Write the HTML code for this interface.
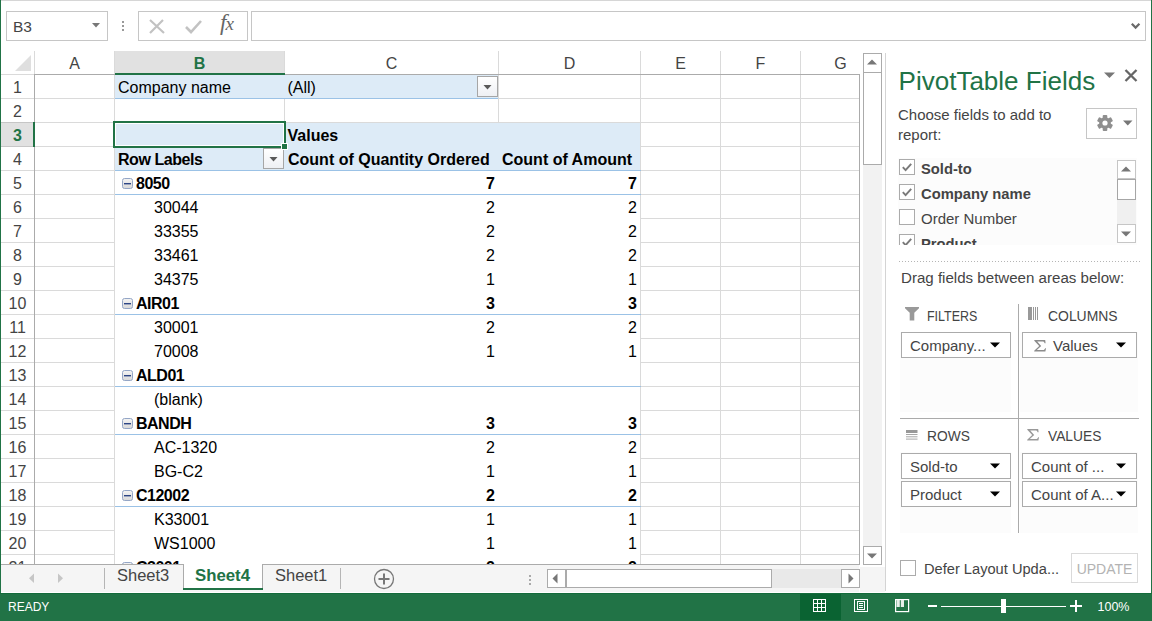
<!DOCTYPE html>
<html><head><meta charset="utf-8"><style>
html,body{margin:0;padding:0;}
body{width:1152px;height:621px;position:relative;overflow:hidden;background:#fff;font-family:"Liberation Sans", sans-serif;}
body>div,body>svg{position:absolute;}
.t{white-space:nowrap;}
svg{display:block;}
</style></head><body>
<div style="left:0px;top:0px;width:1px;height:621px;background:#217346"></div>
<div style="left:1151px;top:0px;width:1px;height:621px;background:#217346"></div>
<div style="left:1px;top:0px;width:1150px;height:1px;background:#d6d6d6"></div>
<div style="left:6px;top:11px;width:102px;height:30px;border:1px solid #c6c6c6;box-sizing:border-box;background:#fff"></div>
<div class="t" style="left:13px;top:16.83px;font-size:15.5px;line-height:20px;color:#444;font-weight:normal;">B3</div>
<svg style="left:92px;top:23px" width="8" height="5"><path d="M0 0H8L4 4.5Z" fill="#777"/></svg>
<div style="left:122px;top:21px;width:2px;height:2px;background:#999"></div>
<div style="left:122px;top:25px;width:2px;height:2px;background:#999"></div>
<div style="left:122px;top:29px;width:2px;height:2px;background:#999"></div>
<div style="left:138px;top:11px;width:110px;height:30px;border:1px solid #c6c6c6;box-sizing:border-box;background:#fff"></div>
<svg style="left:148px;top:18px" width="18" height="17"><path d="M2 2L16 15M15 2L2 15" stroke="#c2c2c2" stroke-width="2.2" fill="none"/></svg>
<svg style="left:184px;top:18px" width="19" height="17"><path d="M2 9L7 14L17 3" stroke="#c2c2c2" stroke-width="2.6" fill="none"/></svg>
<div class="t" style="left:220px;top:11px;font-family:'Liberation Serif',serif;font-style:italic;font-weight:normal;font-size:23px;line-height:24px;color:#666;letter-spacing:-1px">f<span style="font-size:19px">x</span></div>
<div style="left:251px;top:11px;width:895px;height:30px;border:1px solid #c6c6c6;box-sizing:border-box;background:#fff"></div>
<svg style="left:1131px;top:23px" width="10" height="7"><path d="M0 1.6L1.6 0L4.6 3L7.6 0L9.2 1.6L4.6 6.2Z" fill="#6a6a6a"/></svg>
<div style="left:115px;top:51px;width:169px;height:22px;background:#e1e1e1"></div>
<div style="left:114px;top:51px;width:1px;height:23px;background:#dadada"></div>
<div style="left:284px;top:51px;width:1px;height:23px;background:#dadada"></div>
<div style="left:498px;top:51px;width:1px;height:23px;background:#dadada"></div>
<div style="left:640px;top:51px;width:1px;height:23px;background:#dadada"></div>
<div style="left:720px;top:51px;width:1px;height:23px;background:#dadada"></div>
<div style="left:800px;top:51px;width:1px;height:23px;background:#dadada"></div>
<div style="left:34px;top:51px;width:1px;height:23px;background:#dadada"></div>
<div class="t" style="left:-75.5px;width:300px;text-align:center;top:54.26px;font-size:16px;line-height:20px;color:#444;font-weight:normal;">A</div>
<div class="t" style="left:49.5px;width:300px;text-align:center;top:54.26px;font-size:16px;line-height:20px;color:#217346;font-weight:bold;">B</div>
<div class="t" style="left:241.5px;width:300px;text-align:center;top:54.26px;font-size:16px;line-height:20px;color:#444;font-weight:normal;">C</div>
<div class="t" style="left:419.5px;width:300px;text-align:center;top:54.26px;font-size:16px;line-height:20px;color:#444;font-weight:normal;">D</div>
<div class="t" style="left:530.5px;width:300px;text-align:center;top:54.26px;font-size:16px;line-height:20px;color:#444;font-weight:normal;">E</div>
<div class="t" style="left:610.5px;width:300px;text-align:center;top:54.26px;font-size:16px;line-height:20px;color:#444;font-weight:normal;">F</div>
<div class="t" style="left:690.5px;width:300px;text-align:center;top:54.26px;font-size:16px;line-height:20px;color:#444;font-weight:normal;">G</div>
<svg style="left:14px;top:54px" width="18" height="18"><path d="M1 17H17V1Z" fill="#dfdfdf"/></svg>
<div style="left:1px;top:74px;width:33px;height:1px;background:#dadada"></div>
<div style="left:34px;top:74px;width:826px;height:1px;background:#ababab"></div>
<div style="left:115px;top:73px;width:170px;height:2px;background:#217346"></div>
<div style="left:34px;top:74px;width:1px;height:491px;background:#ababab"></div>
<div style="left:859px;top:74px;width:1px;height:491px;background:#ababab"></div>
<div style="left:1px;top:98px;width:33px;height:1px;background:#dadada"></div>
<div class="t" style="left:-132.5px;width:300px;text-align:center;top:78.26px;font-size:16px;line-height:20px;color:#444;font-weight:normal;">1</div>
<div style="left:1px;top:122px;width:33px;height:1px;background:#dadada"></div>
<div class="t" style="left:-132.5px;width:300px;text-align:center;top:102.26px;font-size:16px;line-height:20px;color:#444;font-weight:normal;">2</div>
<div style="left:1px;top:146px;width:33px;height:1px;background:#dadada"></div>
<div style="left:1px;top:123px;width:33px;height:23px;background:#e1e1e1"></div>
<div style="left:1px;top:122px;width:33px;height:1px;background:#c6c6c6"></div>
<div style="left:1px;top:146px;width:33px;height:1px;background:#c6c6c6"></div>
<div style="left:33px;top:122px;width:2px;height:25px;background:#217346"></div>
<div class="t" style="left:-132.5px;width:300px;text-align:center;top:126.26px;font-size:16px;line-height:20px;color:#217346;font-weight:bold;">3</div>
<div style="left:1px;top:170px;width:33px;height:1px;background:#dadada"></div>
<div class="t" style="left:-132.5px;width:300px;text-align:center;top:150.26px;font-size:16px;line-height:20px;color:#444;font-weight:normal;">4</div>
<div style="left:1px;top:194px;width:33px;height:1px;background:#dadada"></div>
<div class="t" style="left:-132.5px;width:300px;text-align:center;top:174.26px;font-size:16px;line-height:20px;color:#444;font-weight:normal;">5</div>
<div style="left:1px;top:218px;width:33px;height:1px;background:#dadada"></div>
<div class="t" style="left:-132.5px;width:300px;text-align:center;top:198.26px;font-size:16px;line-height:20px;color:#444;font-weight:normal;">6</div>
<div style="left:1px;top:242px;width:33px;height:1px;background:#dadada"></div>
<div class="t" style="left:-132.5px;width:300px;text-align:center;top:222.26px;font-size:16px;line-height:20px;color:#444;font-weight:normal;">7</div>
<div style="left:1px;top:266px;width:33px;height:1px;background:#dadada"></div>
<div class="t" style="left:-132.5px;width:300px;text-align:center;top:246.26px;font-size:16px;line-height:20px;color:#444;font-weight:normal;">8</div>
<div style="left:1px;top:290px;width:33px;height:1px;background:#dadada"></div>
<div class="t" style="left:-132.5px;width:300px;text-align:center;top:270.26px;font-size:16px;line-height:20px;color:#444;font-weight:normal;">9</div>
<div style="left:1px;top:314px;width:33px;height:1px;background:#dadada"></div>
<div class="t" style="left:-132.5px;width:300px;text-align:center;top:294.26px;font-size:16px;line-height:20px;color:#444;font-weight:normal;">10</div>
<div style="left:1px;top:338px;width:33px;height:1px;background:#dadada"></div>
<div class="t" style="left:-132.5px;width:300px;text-align:center;top:318.26px;font-size:16px;line-height:20px;color:#444;font-weight:normal;">11</div>
<div style="left:1px;top:362px;width:33px;height:1px;background:#dadada"></div>
<div class="t" style="left:-132.5px;width:300px;text-align:center;top:342.26px;font-size:16px;line-height:20px;color:#444;font-weight:normal;">12</div>
<div style="left:1px;top:386px;width:33px;height:1px;background:#dadada"></div>
<div class="t" style="left:-132.5px;width:300px;text-align:center;top:366.26px;font-size:16px;line-height:20px;color:#444;font-weight:normal;">13</div>
<div style="left:1px;top:410px;width:33px;height:1px;background:#dadada"></div>
<div class="t" style="left:-132.5px;width:300px;text-align:center;top:390.26px;font-size:16px;line-height:20px;color:#444;font-weight:normal;">14</div>
<div style="left:1px;top:434px;width:33px;height:1px;background:#dadada"></div>
<div class="t" style="left:-132.5px;width:300px;text-align:center;top:414.26px;font-size:16px;line-height:20px;color:#444;font-weight:normal;">15</div>
<div style="left:1px;top:458px;width:33px;height:1px;background:#dadada"></div>
<div class="t" style="left:-132.5px;width:300px;text-align:center;top:438.26px;font-size:16px;line-height:20px;color:#444;font-weight:normal;">16</div>
<div style="left:1px;top:482px;width:33px;height:1px;background:#dadada"></div>
<div class="t" style="left:-132.5px;width:300px;text-align:center;top:462.26px;font-size:16px;line-height:20px;color:#444;font-weight:normal;">17</div>
<div style="left:1px;top:506px;width:33px;height:1px;background:#dadada"></div>
<div class="t" style="left:-132.5px;width:300px;text-align:center;top:486.26px;font-size:16px;line-height:20px;color:#444;font-weight:normal;">18</div>
<div style="left:1px;top:530px;width:33px;height:1px;background:#dadada"></div>
<div class="t" style="left:-132.5px;width:300px;text-align:center;top:510.26px;font-size:16px;line-height:20px;color:#444;font-weight:normal;">19</div>
<div style="left:1px;top:554px;width:33px;height:1px;background:#dadada"></div>
<div class="t" style="left:-132.5px;width:300px;text-align:center;top:534.26px;font-size:16px;line-height:20px;color:#444;font-weight:normal;">20</div>
<div class="t" style="left:-132.5px;width:300px;text-align:center;top:558.26px;font-size:16px;line-height:20px;color:#444;font-weight:normal;">21</div>
<div style="left:35px;top:98px;width:824px;height:1px;background:#dadada"></div>
<div style="left:35px;top:122px;width:824px;height:1px;background:#dadada"></div>
<div style="left:35px;top:146px;width:824px;height:1px;background:#dadada"></div>
<div style="left:35px;top:170px;width:824px;height:1px;background:#dadada"></div>
<div style="left:35px;top:194px;width:824px;height:1px;background:#dadada"></div>
<div style="left:35px;top:218px;width:824px;height:1px;background:#dadada"></div>
<div style="left:35px;top:242px;width:824px;height:1px;background:#dadada"></div>
<div style="left:35px;top:266px;width:824px;height:1px;background:#dadada"></div>
<div style="left:35px;top:290px;width:824px;height:1px;background:#dadada"></div>
<div style="left:35px;top:314px;width:824px;height:1px;background:#dadada"></div>
<div style="left:35px;top:338px;width:824px;height:1px;background:#dadada"></div>
<div style="left:35px;top:362px;width:824px;height:1px;background:#dadada"></div>
<div style="left:35px;top:386px;width:824px;height:1px;background:#dadada"></div>
<div style="left:35px;top:410px;width:824px;height:1px;background:#dadada"></div>
<div style="left:35px;top:434px;width:824px;height:1px;background:#dadada"></div>
<div style="left:35px;top:458px;width:824px;height:1px;background:#dadada"></div>
<div style="left:35px;top:482px;width:824px;height:1px;background:#dadada"></div>
<div style="left:35px;top:506px;width:824px;height:1px;background:#dadada"></div>
<div style="left:35px;top:530px;width:824px;height:1px;background:#dadada"></div>
<div style="left:35px;top:554px;width:824px;height:1px;background:#dadada"></div>
<div style="left:114px;top:75px;width:1px;height:489px;background:#dadada"></div>
<div style="left:284px;top:75px;width:1px;height:489px;background:#dadada"></div>
<div style="left:498px;top:75px;width:1px;height:489px;background:#dadada"></div>
<div style="left:640px;top:75px;width:1px;height:489px;background:#dadada"></div>
<div style="left:720px;top:75px;width:1px;height:489px;background:#dadada"></div>
<div style="left:800px;top:75px;width:1px;height:489px;background:#dadada"></div>
<div style="left:115px;top:75px;width:383px;height:23px;background:#ddebf7"></div>
<div style="left:115px;top:98px;width:383px;height:1px;background:#9bc2e6"></div>
<div style="left:115px;top:123px;width:525px;height:47px;background:#ddebf7"></div>
<div style="left:115px;top:170px;width:526px;height:1px;background:#9bc2e6"></div>
<div style="left:115px;top:171px;width:525px;height:393px;background:#fff"></div>
<svg style="left:122px;top:178px" width="11" height="11"><defs><linearGradient id="cg178" x1="0" y1="0" x2="0" y2="1"><stop offset="0" stop-color="#f4f4f4"/><stop offset="1" stop-color="#d8d8d8"/></linearGradient></defs><rect x="0.5" y="0.5" width="10" height="10" rx="2" fill="url(#cg178)" stroke="#94a6c6"/><rect x="2" y="5" width="7" height="1.4" fill="#2c4584"/></svg>
<div class="t" style="left:136px;top:174.46px;font-size:16px;line-height:20px;color:#000;font-weight:bold;letter-spacing:-0.5px">8050</div>
<div style="left:115px;top:194px;width:526px;height:1px;background:#9bc2e6"></div>
<div class="t" style="left:195px;width:300px;text-align:right;top:174.46px;font-size:16px;line-height:20px;color:#000;font-weight:bold;">7</div>
<div class="t" style="left:337px;width:300px;text-align:right;top:174.46px;font-size:16px;line-height:20px;color:#000;font-weight:bold;">7</div>
<div class="t" style="left:154px;top:198.46px;font-size:16px;line-height:20px;color:#000;font-weight:normal;">30044</div>
<div class="t" style="left:195px;width:300px;text-align:right;top:198.46px;font-size:16px;line-height:20px;color:#000;font-weight:normal;">2</div>
<div class="t" style="left:337px;width:300px;text-align:right;top:198.46px;font-size:16px;line-height:20px;color:#000;font-weight:normal;">2</div>
<div class="t" style="left:154px;top:222.46px;font-size:16px;line-height:20px;color:#000;font-weight:normal;">33355</div>
<div class="t" style="left:195px;width:300px;text-align:right;top:222.46px;font-size:16px;line-height:20px;color:#000;font-weight:normal;">2</div>
<div class="t" style="left:337px;width:300px;text-align:right;top:222.46px;font-size:16px;line-height:20px;color:#000;font-weight:normal;">2</div>
<div class="t" style="left:154px;top:246.46px;font-size:16px;line-height:20px;color:#000;font-weight:normal;">33461</div>
<div class="t" style="left:195px;width:300px;text-align:right;top:246.46px;font-size:16px;line-height:20px;color:#000;font-weight:normal;">2</div>
<div class="t" style="left:337px;width:300px;text-align:right;top:246.46px;font-size:16px;line-height:20px;color:#000;font-weight:normal;">2</div>
<div class="t" style="left:154px;top:270.46px;font-size:16px;line-height:20px;color:#000;font-weight:normal;">34375</div>
<div class="t" style="left:195px;width:300px;text-align:right;top:270.46px;font-size:16px;line-height:20px;color:#000;font-weight:normal;">1</div>
<div class="t" style="left:337px;width:300px;text-align:right;top:270.46px;font-size:16px;line-height:20px;color:#000;font-weight:normal;">1</div>
<svg style="left:122px;top:298px" width="11" height="11"><defs><linearGradient id="cg298" x1="0" y1="0" x2="0" y2="1"><stop offset="0" stop-color="#f4f4f4"/><stop offset="1" stop-color="#d8d8d8"/></linearGradient></defs><rect x="0.5" y="0.5" width="10" height="10" rx="2" fill="url(#cg298)" stroke="#94a6c6"/><rect x="2" y="5" width="7" height="1.4" fill="#2c4584"/></svg>
<div class="t" style="left:136px;top:294.46px;font-size:16px;line-height:20px;color:#000;font-weight:bold;letter-spacing:-0.5px">AIR01</div>
<div style="left:115px;top:314px;width:526px;height:1px;background:#9bc2e6"></div>
<div class="t" style="left:195px;width:300px;text-align:right;top:294.46px;font-size:16px;line-height:20px;color:#000;font-weight:bold;">3</div>
<div class="t" style="left:337px;width:300px;text-align:right;top:294.46px;font-size:16px;line-height:20px;color:#000;font-weight:bold;">3</div>
<div class="t" style="left:154px;top:318.46px;font-size:16px;line-height:20px;color:#000;font-weight:normal;">30001</div>
<div class="t" style="left:195px;width:300px;text-align:right;top:318.46px;font-size:16px;line-height:20px;color:#000;font-weight:normal;">2</div>
<div class="t" style="left:337px;width:300px;text-align:right;top:318.46px;font-size:16px;line-height:20px;color:#000;font-weight:normal;">2</div>
<div class="t" style="left:154px;top:342.46px;font-size:16px;line-height:20px;color:#000;font-weight:normal;">70008</div>
<div class="t" style="left:195px;width:300px;text-align:right;top:342.46px;font-size:16px;line-height:20px;color:#000;font-weight:normal;">1</div>
<div class="t" style="left:337px;width:300px;text-align:right;top:342.46px;font-size:16px;line-height:20px;color:#000;font-weight:normal;">1</div>
<svg style="left:122px;top:370px" width="11" height="11"><defs><linearGradient id="cg370" x1="0" y1="0" x2="0" y2="1"><stop offset="0" stop-color="#f4f4f4"/><stop offset="1" stop-color="#d8d8d8"/></linearGradient></defs><rect x="0.5" y="0.5" width="10" height="10" rx="2" fill="url(#cg370)" stroke="#94a6c6"/><rect x="2" y="5" width="7" height="1.4" fill="#2c4584"/></svg>
<div class="t" style="left:136px;top:366.46px;font-size:16px;line-height:20px;color:#000;font-weight:bold;letter-spacing:-0.5px">ALD01</div>
<div style="left:115px;top:386px;width:526px;height:1px;background:#9bc2e6"></div>
<div class="t" style="left:154px;top:390.46px;font-size:16px;line-height:20px;color:#000;font-weight:normal;">(blank)</div>
<svg style="left:122px;top:418px" width="11" height="11"><defs><linearGradient id="cg418" x1="0" y1="0" x2="0" y2="1"><stop offset="0" stop-color="#f4f4f4"/><stop offset="1" stop-color="#d8d8d8"/></linearGradient></defs><rect x="0.5" y="0.5" width="10" height="10" rx="2" fill="url(#cg418)" stroke="#94a6c6"/><rect x="2" y="5" width="7" height="1.4" fill="#2c4584"/></svg>
<div class="t" style="left:136px;top:414.46px;font-size:16px;line-height:20px;color:#000;font-weight:bold;letter-spacing:-0.5px">BANDH</div>
<div style="left:115px;top:434px;width:526px;height:1px;background:#9bc2e6"></div>
<div class="t" style="left:195px;width:300px;text-align:right;top:414.46px;font-size:16px;line-height:20px;color:#000;font-weight:bold;">3</div>
<div class="t" style="left:337px;width:300px;text-align:right;top:414.46px;font-size:16px;line-height:20px;color:#000;font-weight:bold;">3</div>
<div class="t" style="left:154px;top:438.46px;font-size:16px;line-height:20px;color:#000;font-weight:normal;">AC-1320</div>
<div class="t" style="left:195px;width:300px;text-align:right;top:438.46px;font-size:16px;line-height:20px;color:#000;font-weight:normal;">2</div>
<div class="t" style="left:337px;width:300px;text-align:right;top:438.46px;font-size:16px;line-height:20px;color:#000;font-weight:normal;">2</div>
<div class="t" style="left:154px;top:462.46px;font-size:16px;line-height:20px;color:#000;font-weight:normal;">BG-C2</div>
<div class="t" style="left:195px;width:300px;text-align:right;top:462.46px;font-size:16px;line-height:20px;color:#000;font-weight:normal;">1</div>
<div class="t" style="left:337px;width:300px;text-align:right;top:462.46px;font-size:16px;line-height:20px;color:#000;font-weight:normal;">1</div>
<svg style="left:122px;top:490px" width="11" height="11"><defs><linearGradient id="cg490" x1="0" y1="0" x2="0" y2="1"><stop offset="0" stop-color="#f4f4f4"/><stop offset="1" stop-color="#d8d8d8"/></linearGradient></defs><rect x="0.5" y="0.5" width="10" height="10" rx="2" fill="url(#cg490)" stroke="#94a6c6"/><rect x="2" y="5" width="7" height="1.4" fill="#2c4584"/></svg>
<div class="t" style="left:136px;top:486.46px;font-size:16px;line-height:20px;color:#000;font-weight:bold;letter-spacing:-0.5px">C12002</div>
<div style="left:115px;top:506px;width:526px;height:1px;background:#9bc2e6"></div>
<div class="t" style="left:195px;width:300px;text-align:right;top:486.46px;font-size:16px;line-height:20px;color:#000;font-weight:bold;">2</div>
<div class="t" style="left:337px;width:300px;text-align:right;top:486.46px;font-size:16px;line-height:20px;color:#000;font-weight:bold;">2</div>
<div class="t" style="left:154px;top:510.46px;font-size:16px;line-height:20px;color:#000;font-weight:normal;">K33001</div>
<div class="t" style="left:195px;width:300px;text-align:right;top:510.46px;font-size:16px;line-height:20px;color:#000;font-weight:normal;">1</div>
<div class="t" style="left:337px;width:300px;text-align:right;top:510.46px;font-size:16px;line-height:20px;color:#000;font-weight:normal;">1</div>
<div class="t" style="left:154px;top:534.46px;font-size:16px;line-height:20px;color:#000;font-weight:normal;">WS1000</div>
<div class="t" style="left:195px;width:300px;text-align:right;top:534.46px;font-size:16px;line-height:20px;color:#000;font-weight:normal;">1</div>
<div class="t" style="left:337px;width:300px;text-align:right;top:534.46px;font-size:16px;line-height:20px;color:#000;font-weight:normal;">1</div>
<svg style="left:122px;top:562px" width="11" height="11"><defs><linearGradient id="cg562" x1="0" y1="0" x2="0" y2="1"><stop offset="0" stop-color="#f4f4f4"/><stop offset="1" stop-color="#d8d8d8"/></linearGradient></defs><rect x="0.5" y="0.5" width="10" height="10" rx="2" fill="url(#cg562)" stroke="#94a6c6"/><rect x="2" y="5" width="7" height="1.4" fill="#2c4584"/></svg>
<div class="t" style="left:136px;top:558.46px;font-size:16px;line-height:20px;color:#000;font-weight:bold;letter-spacing:-0.5px">C3001</div>
<div class="t" style="left:195px;width:300px;text-align:right;top:558.46px;font-size:16px;line-height:20px;color:#000;font-weight:bold;">2</div>
<div class="t" style="left:337px;width:300px;text-align:right;top:558.46px;font-size:16px;line-height:20px;color:#000;font-weight:bold;">2</div>
<div class="t" style="left:118px;top:78.46px;font-size:16px;line-height:20px;color:#000;font-weight:normal;">Company name</div>
<div class="t" style="left:287.5px;top:78.46px;font-size:16px;line-height:20px;color:#000;font-weight:normal;">(All)</div>
<div class="t" style="left:287.5px;top:126.46px;font-size:16px;line-height:20px;color:#000;font-weight:bold;">Values</div>
<div class="t" style="left:118px;top:150.46px;font-size:16px;line-height:20px;color:#000;font-weight:bold;letter-spacing:-0.45px">Row Labels</div>
<div class="t" style="left:288px;top:150.46px;font-size:16px;line-height:20px;color:#000;font-weight:bold;">Count of Quantity Ordered</div>
<div class="t" style="left:502px;top:150.46px;font-size:16px;line-height:20px;color:#000;font-weight:bold;">Count of Amount</div>
<div style="left:477px;top:76px;width:21px;height:21px;box-sizing:border-box;border:1px solid #a6a6a6;background:linear-gradient(#ffffff,#eef0f4)"></div>
<svg style="left:483px;top:85px" width="9" height="5"><path d="M0.5 0H8.5L4.5 4.5Z" fill="#595959"/></svg>
<div style="left:263px;top:148px;width:21px;height:21px;box-sizing:border-box;border:1px solid #a6a6a6;background:linear-gradient(#ffffff,#eef0f4)"></div>
<svg style="left:269px;top:157px" width="9" height="5"><path d="M0.5 0H8.5L4.5 4.5Z" fill="#595959"/></svg>
<div style="left:113px;top:121px;width:173px;height:27px;border:2px solid #217346;box-sizing:border-box"></div>
<div style="left:115px;top:123px;width:169px;height:23px;border:1px solid #fff;box-sizing:border-box"></div>
<div style="left:281px;top:143px;width:7px;height:7px;background:#fff"></div>
<div style="left:282px;top:144px;width:5px;height:5px;background:#217346"></div>
<div style="left:1px;top:564px;width:858px;height:28px;background:#f5f5f5"></div>
<div style="left:1px;top:564px;width:859px;height:1px;background:#ababab"></div>
<div style="left:1px;top:592px;width:884px;height:1px;background:#fff"></div>
<div style="left:863px;top:53px;width:19px;height:512px;background:#f2f2f2"></div>
<div style="left:863px;top:53px;width:19px;height:20px;border:1px solid #ababab;box-sizing:border-box;background:#fff"></div>
<svg style="left:867px;top:59px" width="11" height="6"><path d="M0 5.5H10L5 0.5Z" fill="#777"/></svg>
<div style="left:863px;top:72px;width:19px;height:93px;border:1px solid #ababab;box-sizing:border-box;background:#fff"></div>
<div style="left:863px;top:546px;width:19px;height:19px;border:1px solid #ababab;box-sizing:border-box;background:#fff"></div>
<svg style="left:867px;top:553px" width="11" height="6"><path d="M0 0.5H10L5 5.5Z" fill="#777"/></svg>
<div style="left:860px;top:567px;width:25px;height:25px;background:#f5f5f5"></div>
<div style="left:885px;top:53px;width:1px;height:538px;background:#d4d4d4"></div>
<svg style="left:28px;top:573px" width="7" height="11"><path d="M6 0.5V10L1 5.25Z" fill="#c6c6c6"/></svg>
<svg style="left:57px;top:573px" width="7" height="11"><path d="M1 0.5V10L6 5.25Z" fill="#c6c6c6"/></svg>
<div style="left:104px;top:568px;width:1px;height:21px;background:#b5b5b5"></div>
<div class="t" style="left:117px;top:565.08px;font-size:16.5px;line-height:20px;color:#444;font-weight:normal;">Sheet3</div>
<div style="left:183px;top:564px;width:80px;height:26px;background:#fff;border-left:1px solid #ababab;border-right:1px solid #ababab;box-sizing:border-box"></div>
<div style="left:183px;top:588px;width:80px;height:2px;background:#217346"></div>
<div class="t" style="left:195px;top:565.78px;font-size:16.8px;line-height:20px;color:#217346;font-weight:bold;">Sheet4</div>
<div class="t" style="left:275px;top:565.08px;font-size:16.5px;line-height:20px;color:#444;font-weight:normal;">Sheet1</div>
<div style="left:340px;top:568px;width:1px;height:21px;background:#b5b5b5"></div>
<svg style="left:373px;top:568px" width="22" height="22"><circle cx="11" cy="11" r="9.5" fill="none" stroke="#777" stroke-width="1.3"/><path d="M11 5.5V16.5M5.5 11H16.5" stroke="#777" stroke-width="2"/></svg>
<div style="left:529px;top:575px;width:2px;height:2px;background:#aaa"></div>
<div style="left:529px;top:579px;width:2px;height:2px;background:#aaa"></div>
<div style="left:529px;top:583px;width:2px;height:2px;background:#aaa"></div>
<div style="left:547px;top:569px;width:313px;height:19px;background:#e9e9e9"></div>
<div style="left:547px;top:569px;width:19px;height:19px;border:1px solid #ababab;box-sizing:border-box;background:#fff"></div>
<svg style="left:552px;top:573px" width="6" height="11"><path d="M5.5 0.5V10.5L0.5 5.5Z" fill="#777"/></svg>
<div style="left:566px;top:569px;width:206px;height:19px;border:1px solid #ababab;box-sizing:border-box;background:#fff"></div>
<div style="left:841px;top:569px;width:19px;height:19px;border:1px solid #ababab;box-sizing:border-box;background:#fff"></div>
<svg style="left:848px;top:573px" width="6" height="11"><path d="M0.5 0.5V10.5L5.5 5.5Z" fill="#777"/></svg>
<div style="left:0px;top:593px;width:1152px;height:28px;background:#217346"></div>
<div style="left:0px;top:593px;width:1152px;height:1px;background:#146b3b"></div>
<div class="t" style="left:8px;top:596.84px;font-size:12px;line-height:20px;color:#fff;font-weight:normal;">READY</div>
<div style="left:800px;top:594px;width:41px;height:26px;background:#0a6332"></div>
<svg style="left:813px;top:599px" width="13" height="13" shape-rendering="crispEdges"><rect width="13" height="13" fill="#fff"/><rect x="1" y="1" width="3" height="3" fill="#0a6332"/><rect x="1" y="5" width="3" height="3" fill="#0a6332"/><rect x="1" y="9" width="3" height="3" fill="#0a6332"/><rect x="5" y="1" width="3" height="3" fill="#0a6332"/><rect x="5" y="5" width="3" height="3" fill="#0a6332"/><rect x="5" y="9" width="3" height="3" fill="#0a6332"/><rect x="9" y="1" width="3" height="3" fill="#0a6332"/><rect x="9" y="5" width="3" height="3" fill="#0a6332"/><rect x="9" y="9" width="3" height="3" fill="#0a6332"/></svg>
<svg style="left:854px;top:599px" width="14" height="13" shape-rendering="crispEdges"><rect x="0.5" y="0.5" width="13" height="12" stroke="#fff" stroke-width="1" fill="none"/><rect x="3.5" y="2.5" width="7" height="8" stroke="#fff" stroke-width="1" fill="none"/><path d="M5 4.5H9M5 6.5H9M5 8.5H9" stroke="#fff" stroke-width="1"/></svg>
<svg style="left:895px;top:599px" width="15" height="14"><rect x="0.6" y="0.6" width="13" height="12" stroke="#fff" stroke-width="1.2" fill="none"/><path d="M1.5 1H4.8V8H1.5Z M5.8 1H9V8H5.8Z" fill="#e6eee9"/></svg>
<div style="left:928px;top:605px;width:9px;height:2px;background:#fff"></div>
<div style="left:941px;top:606px;width:125px;height:1px;background:#fff"></div>
<div style="left:1001px;top:599px;width:5px;height:14px;background:#fff"></div>
<div style="left:1070px;top:605px;width:12px;height:2px;background:#fff"></div>
<div style="left:1075px;top:600px;width:2px;height:12px;background:#fff"></div>
<div class="t" style="left:1097.5px;top:596.67px;font-size:12.5px;line-height:20px;color:#fff;font-weight:normal;">100%</div>
<div class="t" style="left:898.6px;top:71.29px;font-size:26px;line-height:20px;color:#217346;font-weight:normal;">PivotTable Fields</div>
<svg style="left:1104px;top:72px" width="11" height="7"><path d="M0 0.5H11L5.5 6Z" fill="#777"/></svg>
<svg style="left:1124px;top:69px" width="14" height="13"><path d="M1.5 1L12.5 12M12.5 1L1.5 12" stroke="#666" stroke-width="2.3" fill="none"/></svg>
<div class="t" style="left:898px;top:105.30px;font-size:15px;line-height:20px;color:#444;font-weight:normal;">Choose fields to add to</div>
<div class="t" style="left:898px;top:125.00px;font-size:15px;line-height:20px;color:#444;font-weight:normal;">report:</div>
<div style="left:1086px;top:108px;width:51px;height:31px;border:1px solid #c6c6c6;box-sizing:border-box;background:#fff"></div>
<svg style="left:1097px;top:115px" width="16" height="16"><g transform="translate(8 8)" fill="#8f8f8f"><circle r="5.8"/><rect x="-2.3" y="-8" width="4.6" height="5" rx="1" transform="rotate(0)"/><rect x="-2.3" y="-8" width="4.6" height="5" rx="1" transform="rotate(60)"/><rect x="-2.3" y="-8" width="4.6" height="5" rx="1" transform="rotate(120)"/><rect x="-2.3" y="-8" width="4.6" height="5" rx="1" transform="rotate(180)"/><rect x="-2.3" y="-8" width="4.6" height="5" rx="1" transform="rotate(240)"/><rect x="-2.3" y="-8" width="4.6" height="5" rx="1" transform="rotate(300)"/></g><circle cx="8" cy="8" r="2.6" fill="#fff"/></svg>
<svg style="left:1123px;top:120px" width="10" height="6"><path d="M0 0.5H9.5L4.75 5.5Z" fill="#777"/></svg>
<div style="left:898px;top:158px;width:239px;height:87px;background:#fcfcfc;overflow:hidden"></div>
<div style="left:899px;top:159px;width:16px;height:16px;overflow:hidden"><div style="position:absolute;left:0;top:0;width:16px;height:16px;box-sizing:border-box;border:1px solid #ababab;background:#fff"></div><svg style="position:absolute;left:3px;top:4px" width="10" height="9"><path d="M0.8 4.2L3.6 7.2L9.2 0.8" stroke="#7a7a7a" stroke-width="1.9" fill="none"/></svg></div>
<div class="t" style="left:921px;top:159.00px;height:20.00px;overflow:hidden;line-height:20px;color:#444;font-weight:bold;font-size:14.75px">Sold-to</div>
<div style="left:899px;top:184px;width:16px;height:16px;overflow:hidden"><div style="position:absolute;left:0;top:0;width:16px;height:16px;box-sizing:border-box;border:1px solid #ababab;background:#fff"></div><svg style="position:absolute;left:3px;top:4px" width="10" height="9"><path d="M0.8 4.2L3.6 7.2L9.2 0.8" stroke="#7a7a7a" stroke-width="1.9" fill="none"/></svg></div>
<div class="t" style="left:921px;top:184.00px;height:20.00px;overflow:hidden;line-height:20px;color:#444;font-weight:bold;font-size:14.75px">Company name</div>
<div style="left:899px;top:209px;width:16px;height:16px;overflow:hidden"><div style="position:absolute;left:0;top:0;width:16px;height:16px;box-sizing:border-box;border:1px solid #ababab;background:#fff"></div></div>
<div class="t" style="left:921px;top:209.00px;height:20.00px;overflow:hidden;line-height:20px;color:#444;font-weight:normal;font-size:15px">Order Number</div>
<div style="left:899px;top:234px;width:16px;height:11px;overflow:hidden"><div style="position:absolute;left:0;top:0;width:16px;height:16px;box-sizing:border-box;border:1px solid #ababab;background:#fff"></div><svg style="position:absolute;left:3px;top:4px" width="10" height="9"><path d="M0.8 4.2L3.6 7.2L9.2 0.8" stroke="#7a7a7a" stroke-width="1.9" fill="none"/></svg></div>
<div class="t" style="left:921px;top:234.00px;height:11.00px;overflow:hidden;line-height:20px;color:#444;font-weight:bold;font-size:14.75px">Product</div>
<div style="left:1117px;top:160px;width:19px;height:19px;border:1px solid #c6c6c6;box-sizing:border-box;background:#fff"></div>
<svg style="left:1121px;top:166px" width="11" height="6"><path d="M0 5.5H10L5 0.5Z" fill="#777"/></svg>
<div style="left:1117px;top:179px;width:19px;height:21px;border:1px solid #a6a6a6;box-sizing:border-box;background:#fff"></div>
<div style="left:1117px;top:200px;width:19px;height:24px;background:#f0f0f0"></div>
<div style="left:1117px;top:224px;width:19px;height:19px;border:1px solid #c6c6c6;box-sizing:border-box;background:#fff"></div>
<svg style="left:1121px;top:231px" width="11" height="6"><path d="M0 0.5H10L5 5.5Z" fill="#777"/></svg>
<div style="left:899px;top:261px;width:241px;height:1px;background:repeating-linear-gradient(90deg,#b5b5b5 0 1px,transparent 1px 3px)"></div>
<div class="t" style="left:901px;top:267.57px;font-size:15.1px;line-height:20px;color:#444;font-weight:normal;">Drag fields between areas below:</div>
<div style="left:900px;top:304px;width:111px;height:108px;background:#fcfcfc"></div>
<div style="left:1020px;top:304px;width:118px;height:108px;background:#fcfcfc"></div>
<div style="left:900px;top:424px;width:111px;height:109px;background:#fcfcfc"></div>
<div style="left:1020px;top:424px;width:118px;height:109px;background:#fcfcfc"></div>
<div style="left:900px;top:296px;width:238px;height:36px;background:#fff"></div>
<div style="left:900px;top:420px;width:238px;height:32px;background:#fff"></div>
<div style="left:1018px;top:304px;width:1px;height:229px;background:#ababab"></div>
<div style="left:900px;top:418px;width:239px;height:1px;background:#ababab"></div>
<svg style="left:905px;top:307px" width="15" height="15"><path d="M0 0H14V1.2L9.3 5.8V13.6H4.7V5.8L0 1.2Z" fill="#999"/></svg>
<div class="t" style="left:927px;top:305.68px;font-size:14.5px;line-height:20px;color:#444;font-weight:normal;transform:scaleX(0.86);transform-origin:0 0">FILTERS</div>
<svg style="left:1028px;top:307px" width="11" height="14"><path d="M0 0H4V13H0Z" fill="#999"/><path d="M5.5 0V13M7.5 0V13M9.5 0V13" stroke="#999" stroke-width="1"/></svg>
<div class="t" style="left:1048px;top:305.68px;font-size:14.5px;line-height:20px;color:#444;font-weight:normal;transform:scaleX(0.96);transform-origin:0 0">COLUMNS</div>
<svg style="left:906px;top:430px" width="12" height="11"><rect x="0" y="0" width="11.5" height="3" fill="#999"/><path d="M0 4.5H11.5M0 6.8H11.5M0 9.1H11.5" stroke="#a6a6a6" stroke-width="1"/></svg>
<div class="t" style="left:927px;top:426.38px;font-size:14.5px;line-height:20px;color:#444;font-weight:normal;transform:scaleX(0.95);transform-origin:0 0">ROWS</div>
<svg style="left:1027px;top:429px" width="13" height="12"><path d="M0.3 0H11.2L11.6 3.2H10.6C10.3 2 9.8 1.5 8.5 1.5H3.2L7.2 6L2.8 10H9C10.2 10 10.8 9.3 11.1 8.2H12L11.4 11.6H0.2V10.8L5.2 5.9L0.3 0.8Z" fill="#999"/></svg>
<div class="t" style="left:1048px;top:426.38px;font-size:14.5px;line-height:20px;color:#444;font-weight:normal;transform:scaleX(0.95);transform-origin:0 0">VALUES</div>
<div style="left:901px;top:332px;width:110px;height:26px;box-sizing:border-box;border:1px solid #ababab;background:#fff"></div>
<div class="t" style="left:910px;top:335.80px;font-size:15px;line-height:20px;color:#444;font-weight:normal;">Company...</div>
<svg style="left:990px;top:342px" width="10" height="6"><path d="M0 0.5H10L5 5.5Z" fill="#000"/></svg>
<div style="left:1022px;top:332px;width:115px;height:26px;box-sizing:border-box;border:1px solid #ababab;background:#fff"></div>
<svg style="left:1034px;top:340px" width="13" height="12"><path d="M0.3 0H11.2L11.6 3.2H10.6C10.3 2 9.8 1.5 8.5 1.5H3.2L7.2 6L2.8 10H9C10.2 10 10.8 9.3 11.1 8.2H12L11.4 11.6H0.2V10.8L5.2 5.9L0.3 0.8Z" fill="#8c8c8c"/></svg>
<div class="t" style="left:1053px;top:335.80px;font-size:15px;line-height:20px;color:#444;font-weight:normal;">Values</div>
<svg style="left:1116px;top:342px" width="10" height="6"><path d="M0 0.5H10L5 5.5Z" fill="#000"/></svg>
<div style="left:901px;top:453px;width:110px;height:26px;box-sizing:border-box;border:1px solid #ababab;background:#fff"></div>
<div class="t" style="left:910px;top:456.80px;font-size:15px;line-height:20px;color:#444;font-weight:normal;">Sold-to</div>
<svg style="left:990px;top:463px" width="10" height="6"><path d="M0 0.5H10L5 5.5Z" fill="#000"/></svg>
<div style="left:901px;top:481px;width:110px;height:26px;box-sizing:border-box;border:1px solid #ababab;background:#fff"></div>
<div class="t" style="left:910px;top:484.80px;font-size:15px;line-height:20px;color:#444;font-weight:normal;">Product</div>
<svg style="left:990px;top:491px" width="10" height="6"><path d="M0 0.5H10L5 5.5Z" fill="#000"/></svg>
<div style="left:1022px;top:453px;width:115px;height:26px;box-sizing:border-box;border:1px solid #ababab;background:#fff"></div>
<div class="t" style="left:1031px;top:456.80px;font-size:15px;line-height:20px;color:#444;font-weight:normal;">Count of ...</div>
<svg style="left:1116px;top:463px" width="10" height="6"><path d="M0 0.5H10L5 5.5Z" fill="#000"/></svg>
<div style="left:1022px;top:481px;width:115px;height:26px;box-sizing:border-box;border:1px solid #ababab;background:#fff"></div>
<div class="t" style="left:1031px;top:484.80px;font-size:15px;line-height:20px;color:#444;font-weight:normal;">Count of A...</div>
<svg style="left:1116px;top:491px" width="10" height="6"><path d="M0 0.5H10L5 5.5Z" fill="#000"/></svg>
<div style="left:900px;top:560px;width:16px;height:16px;border:1px solid #ababab;box-sizing:border-box;background:#fff"></div>
<div class="t" style="left:924px;top:558.52px;font-size:14.65px;line-height:20px;color:#444;font-weight:normal;">Defer Layout Upda...</div>
<div style="left:1071px;top:553px;width:67px;height:30px;border:1px solid #dadada;box-sizing:border-box;background:#fff"></div>
<div class="t" style="left:954.5px;width:300px;text-align:center;top:558.95px;font-size:14px;line-height:20px;color:#b3b3b3;font-weight:normal;">UPDATE</div>
</body></html>
